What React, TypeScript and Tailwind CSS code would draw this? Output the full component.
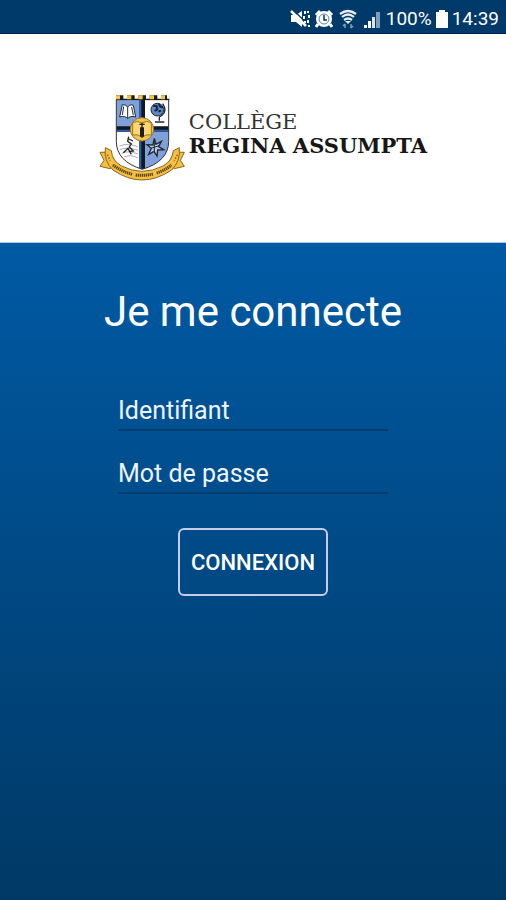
import { useState } from 'react'

function MuteIcon() {
  return (
    <svg className="w-5 h-5" viewBox="0 0 20 20" fill="none" stroke="#fff" aria-hidden="true">
      <path d="M1 6h5l6-4v16l-6-5H1z" fill="#fff" stroke="none" />
      <path d="M4 2l15 14" stroke="#003a6b" strokeWidth="1.5" />
      <path d="M1 2l15 15" strokeWidth="2.5" />
      <path d="M15 2v3M14 7v3M15 12v2M18 2v2M19 6v3M18 11v3M19 16v2" strokeWidth="2" />
    </svg>
  )
}

function AlarmIcon() {
  return (
    <svg className="w-5 h-5" viewBox="0 0 20 20" fill="none" stroke="#fff" aria-hidden="true">
      <path d="M2 6l4-4M14 2l4 4M4 15l-2 3M16 15l2 3" strokeWidth="3" />
      <circle cx="10" cy="10" r="8" fill="#fff" stroke="none" />
      <circle cx="10" cy="10" r="5" stroke="#5d83a6" strokeWidth="1" />
      <path d="M10 6v5h3" stroke="#003a6b" strokeWidth="1.5" />
    </svg>
  )
}

function WifiIcon() {
  return (
    <svg className="w-5 h-5" viewBox="0 0 20 20" fill="none" stroke="#e5edf5" aria-hidden="true">
      <path d="M2 5q8-6 16 0M4 8q6-5 12 0M6 11q4-3 8 0" strokeWidth="2.2" />
      <path d="M7 12h6l-3 3z" fill="#e5edf5" stroke="none" />
      <path d="M7 19v-4M5 17l2-2M13 15v4M13 19l2-2" stroke="#7f9db9" strokeWidth="1.5" />
    </svg>
  )
}

function SignalIcon() {
  return (
    <svg className="w-5 h-5" viewBox="0 0 20 20" aria-hidden="true">
      <path d="M2 16h3v3H2zM6 12h3v7H6z" fill="#fff" />
      <path d="M10 8h3v11h-3z" fill="#dbe4ec" />
      <path d="M14 3h4v16h-4z" fill="#7f9db9" />
    </svg>
  )
}

function BatteryIcon() {
  return (
    <svg className="w-3 h-5" viewBox="0 0 12 20" fill="#fff" aria-hidden="true">
      <path d="M3 1h6v2h3v16H0V3h3z" />
    </svg>
  )
}

function Crest() {
  return (
    <svg className="w-[86px] h-[88px] shrink-0" viewBox="24 30 258 264" aria-hidden="true">
      <defs>
        <clipPath id="shield">
          <path d="M76 47H233V172Q233 232 154 256Q76 232 76 172Z" />
        </clipPath>
      </defs>
      <g clipPath="url(#shield)">
        <path d="M70 40h170v220H70z" fill="#fff" />
        <path d="M70 40h76v96H70zM158 136h80v124h-80z" fill="#7fa0d8" />
        <path d="M144 40h18v220h-18zM70 127h170v16H70z" fill="#111820" />
        <path d="M144 40h7v220h-7zM70 137h170v6H70z" fill="#2d5ea8" />
      </g>
      <path d="M76 47H233V172Q233 232 154 256Q76 232 76 172Z" fill="none" stroke="#333" strokeWidth="3" />
      <path d="M75 34H235V48H75Z" fill="#1a1a1a" />
      <path d="M75 34h12v12H75zM108 34h13v12h-13zM142 34h13v12h-13zM176 34h13v12h-13zM210 34h12v12h-12z" fill="#f5c542" />
      <path d="M97 32h11v12H97zM131 32h11v12h-11zM165 32h11v12h-11zM199 32h11v12h-11zM228 32h8v12h-8z" fill="#fff" />
      <g stroke="#202a35" strokeWidth="3" strokeLinejoin="round">
        <path d="M94 62Q106 60 110 70Q114 60 127 64L134 99Q117 94 110 104Q103 94 86 99Z" fill="#fff" />
        <path d="M110 70V103M98 68l-4 25M122 69l5 25" fill="none" />
        <circle cx="199" cy="77" r="19" fill="#5f87c5" />
        <path d="M187 65l10 2 2 9-8 5M203 60l5 8 8 2M202 83l8-3" fill="none" stroke="#16233b" strokeWidth="6" />
        <path d="M215 59Q232 85 205 99M205 99v11M192 114h28" fill="none" strokeWidth="4" />
      </g>
      <circle cx="153" cy="136" r="35" fill="#f3c34b" stroke="#9b7430" strokeWidth="3" />
      <path d="M125 116Q139 108 153 117Q167 108 181 116V153Q167 149 153 159Q139 149 125 153Z" fill="#ffd76e" stroke="#9b7430" strokeWidth="3" />
      <path d="M153 116v45M145 121h16M149 130v28M157 130v28" stroke="#17202a" strokeWidth="4" />
      <g fill="none" stroke="#7d868d" strokeWidth="2">
        <path d="M86 186Q110 176 140 188M86 197Q108 187 141 199M92 208Q112 198 141 210M99 219Q118 210 141 222" />
      </g>
      <path d="M113 158l-3 14 11 8-6 9 12 12-13 2M97 206l14-13 10 18M113 165l13 6" fill="none" stroke="#222" strokeWidth="4" />
      <path d="M190 163l5 18 16-9-8 16 15 9-18 1-2 18-9-14-16 9 8-18-13-11 18 1z" fill="#b9cae9" stroke="#1e2732" strokeWidth="4" />
      <path d="M190 172v29M180 193l24-8" stroke="#1e2732" strokeWidth="3" />
      <g fill="#f3c043" stroke="#8c651c" strokeWidth="3" strokeLinejoin="round">
        <path d="M27 205L56 204L75 238L57 254L27 247L39 229Z" />
        <path d="M280 205L251 204L232 238L250 254L280 247L268 229Z" />
        <path d="M43 191L61 200Q64 232 92 246Q153 278 216 246Q243 232 247 200L265 191Q269 232 242 258Q153 318 66 258Q38 232 43 191Z" />
      </g>
      {/* motto on the ribbon */}
      <g fill="none" stroke="#5a431a" strokeWidth="9" strokeDasharray="4 2">
        <path d="M66 243Q92 263 125 271" />
        <path d="M134 273Q160 276 186 270" />
        <path d="M197 267Q221 260 241 243" />
      </g>
      <path d="M49 212l9 18M259 212l-9 18" stroke="#8c651c" strokeWidth="4" strokeDasharray="5 4" />
    </svg>
  )
}

export default function App() {
  const [identifiant, setIdentifiant] = useState('')
  const [motDePasse, setMotDePasse] = useState('')

  return (
    <div className="min-h-screen flex flex-col bg-[#003966] font-['Roboto',sans-serif] text-white">
      <div className="h-[34px] flex items-center justify-end pt-1 pr-[7px] bg-[#003a6b] border-b border-[#00205a] text-[19px] leading-6">
        <div className="flex items-center gap-1 mr-1">
          <MuteIcon />
          <AlarmIcon />
          <WifiIcon />
          <SignalIcon />
        </div>
        <span className="mr-1">100%</span>
        <BatteryIcon />
        <span className="ml-1">14:39</span>
      </div>

      <header className="h-[209px] flex items-center justify-center gap-1 pl-5 bg-white border-b border-[#b9c9e4] text-[#171717]">
        <Crest />
        <div className="pb-2 font-['DejaVu_Serif',serif] text-[21px] leading-6">
          <div className="text-[#333]">COLLÈGE</div>
          <div className="font-bold">REGINA ASSUMPTA</div>
        </div>
      </header>

      <main className="grow flex flex-col items-center bg-linear-to-b from-[#005aa4] to-[#003966] pt-11">
        <h1 className="text-[42px] leading-[50px]">Je me connecte</h1>
        <form className="w-[270px] mt-[47px] flex flex-col items-center" onSubmit={e => e.preventDefault()}>
          <input
            type="text"
            aria-label="Identifiant"
            placeholder="Identifiant"
            value={identifiant}
            onChange={e => setIdentifiant(e.target.value)}
            className="w-full h-[47px] pt-2 bg-transparent border-b-2 border-[#003c70] text-[25px] placeholder:text-[#eef4ff] outline-none"
          />
          <input
            type="password"
            aria-label="Mot de passe"
            placeholder="Mot de passe"
            value={motDePasse}
            onChange={e => setMotDePasse(e.target.value)}
            className="w-full h-[47px] mt-4 pt-2 bg-transparent border-b-2 border-[#003c70] text-[25px] placeholder:text-[#eef4ff] outline-none"
          />
          <button type="submit" className="w-[150px] h-[68px] mt-[34px] border-2 border-[#c3cdea] rounded-md text-[22px] font-medium">
            CONNEXION
          </button>
        </form>
      </main>
    </div>
  )
}
